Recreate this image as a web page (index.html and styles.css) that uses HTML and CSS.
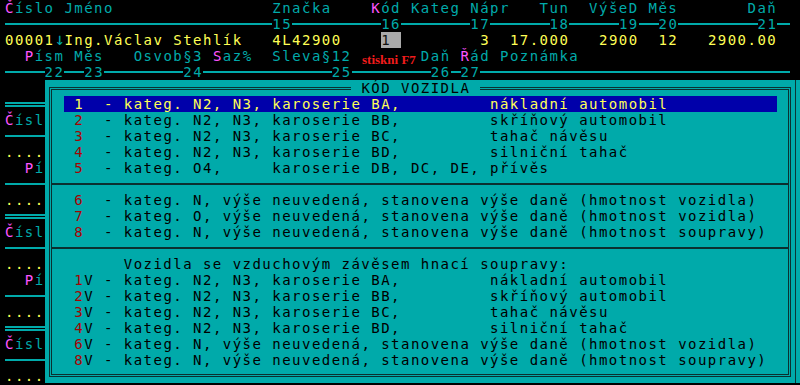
FILE: index.html
```html
<!DOCTYPE html>
<html lang="cs">
<head>
  <meta charset="UTF-8">
  <title>Daň silniční - seznam vozidel</title>
  <link rel="stylesheet" href="styles.css">
</head>
<body>

<div class="screen">
  <!-- prvni zaznam -->
  <div class="row"><span class="m">Č</span>íslo Jméno                Značka    <span class="m">K</span>ód Kateg Nápr   Tun  VýšeD Měs       Daň</div>
  <div class="row rule">                           <b>15</b>         <b>16</b>       <b>17</b>      <b>18</b>     <b>19</b>  <b>20</b>        <b>21</b></div>
  <div class="row y">00001<span class="arrow">↓</span>Ing.Václav Stehlík   4L42900    <span class="inp">1 </span>        3  17.000   2900  12   2900.00</div>
  <div class="row">  <span class="m">P</span>ísm Měs   Osvob§3 <span class="m">S</span>az%  Sleva§12<span class="hint">stiskni F7</span>Daň <span class="m">Ř</span>ád Poznámka</div>
  <div class="row rule">    <b>22</b>  <b>23</b>        <b>24</b>             <b>25</b>        <b>26</b> <b>27</b></div>
  <div class="row"></div>
  <div class="row dbl"></div>

  <!-- dalsi zaznamy pod oknem -->
  <div class="row"><span class="m">Č</span>íslo Jméno                Značka    <span class="m">K</span>ód Kateg Nápr   Tun  VýšeD Měs       Daň</div>
  <div class="row rule">                           <b>15</b>         <b>16</b>       <b>17</b>      <b>18</b>     <b>19</b>  <b>20</b>        <b>21</b></div>
  <div class="row y">.....</div>
  <div class="row">  <span class="m">P</span>ísm Měs   Osvob§3 <span class="m">S</span>az%  Sleva§12       Daň <span class="m">Ř</span>ád Poznámka</div>
  <div class="row rule">    <b>22</b>  <b>23</b>        <b>24</b>             <b>25</b>        <b>26</b> <b>27</b></div>
  <div class="row y">.....</div>
  <div class="row dbl"></div>

  <div class="row"><span class="m">Č</span>íslo Jméno                Značka    <span class="m">K</span>ód Kateg Nápr   Tun  VýšeD Měs       Daň</div>
  <div class="row rule">                           <b>15</b>         <b>16</b>       <b>17</b>      <b>18</b>     <b>19</b>  <b>20</b>        <b>21</b></div>
  <div class="row y">.....</div>
  <div class="row">  <span class="m">P</span>ísm Měs   Osvob§3 <span class="m">S</span>az%  Sleva§12       Daň <span class="m">Ř</span>ád Poznámka</div>
  <div class="row rule">    <b>22</b>  <b>23</b>        <b>24</b>             <b>25</b>        <b>26</b> <b>27</b></div>
  <div class="row y">.....</div>
  <div class="row dbl"></div>

  <div class="row"><span class="m">Č</span>íslo Jméno                Značka    <span class="m">K</span>ód Kateg Nápr   Tun  VýšeD Měs       Daň</div>
  <div class="row rule">                           <b>15</b>         <b>16</b>       <b>17</b>      <b>18</b>     <b>19</b>  <b>20</b>        <b>21</b></div>
  <div class="row y">.....</div>

  <!-- vyber kodu vozidla -->
  <div class="popup">
    <div class="frame">
      <span class="title"> KÓD VOZIDLA </span>
      <div class="row sel"> 1  - kateg. N2, N3, karoserie BA,         nákladní automobil</div>
      <div class="row"> <span class="r">2</span>  - kateg. N2, N3, karoserie BB,         skříňový automobil</div>
      <div class="row"> <span class="r">3</span>  - kateg. N2, N3, karoserie BC,         tahač návěsu</div>
      <div class="row"> <span class="r">4</span>  - kateg. N2, N3, karoserie BD,         silniční tahač</div>
      <div class="row"> <span class="r">5</span>  - kateg. O4,     karoserie DB, DC, DE, přívěs</div>
      <div class="sep"></div>
      <div class="row"> <span class="r">6</span>  - kateg. N, výše neuvedená, stanovena výše daně (hmotnost vozidla)</div>
      <div class="row"> <span class="r">7</span>  - kateg. O, výše neuvedená, stanovena výše daně (hmotnost vozidla)</div>
      <div class="row"> <span class="r">8</span>  - kateg. N, výše neuvedená, stanovena výše daně (hmotnost soupravy)</div>
      <div class="sep"></div>
      <div class="row">      Vozidla se vzduchovým závěsem hnací soupravy:</div>
      <div class="row"> <span class="r">1</span>V - kateg. N2, N3, karoserie BA,         nákladní automobil</div>
      <div class="row"> <span class="r">2</span>V - kateg. N2, N3, karoserie BB,         skříňový automobil</div>
      <div class="row"> <span class="r">3</span>V - kateg. N2, N3, karoserie BC,         tahač návěsu</div>
      <div class="row"> <span class="r">4</span>V - kateg. N2, N3, karoserie BD,         silniční tahač</div>
      <div class="row"> <span class="r">6</span>V - kateg. N, výše neuvedená, stanovena výše daně (hmotnost vozidla)</div>
      <div class="row"> <span class="r">8</span>V - kateg. N, výše neuvedená, stanovena výše daně (hmotnost soupravy)</div>
    </div>
  </div>
</div>

</body>
</html>
```

FILE: styles.css
```css
body {
  margin: 0;
  width: 800px;
  height: 385px;
  overflow: hidden;
  background: #000;
}
.screen {
  position: relative;
  padding-left: 5px;
  font-family: "DejaVu Sans Mono", monospace;
  font-size: 14px;
  line-height: 16px;
  letter-spacing: 1.471px;
  color: #00aaaa;
}
.row {
  height: 16px;
  white-space: pre;
}
.m { color: #ff55ff; }
.y { color: #ffff55; }
.r { color: #aa0000; }
.arrow {
  color: #00aaaa;
  font-size: 17px;
  line-height: 14px;
  letter-spacing: -0.33px;
}
.inp {
  background: #aaaaaa;
  color: #101010;
}
.hint {
  display: inline-block;
  box-sizing: border-box;
  width: 69.3px;
  padding-left: 10.5px;
  font: bold 13px/16px "Liberation Serif", serif;
  letter-spacing: 0;
  color: #f01c1c;
  vertical-align: -3px;
}
.rule {
  width: 785px;
  background: linear-gradient(#00aaaa, #00aaaa) 0 7px / 100% 2px no-repeat;
}
.rule b {
  font-weight: normal;
  background: #000;
}
.dbl {
  width: 785px;
  background:
    linear-gradient(#00aaaa, #00aaaa) 0 6px / 100% 2px no-repeat,
    linear-gradient(#00aaaa, #00aaaa) 0 9px / 100% 2px no-repeat;
}
.popup {
  position: absolute;
  left: 44.6px;
  top: 80px;
  width: 755.4px;
  height: 303px;
  background: #00aaaa;
  color: #000;
  box-shadow: inset -4px 0 0 #00aaaa, inset -5px 0 0 #0b3535;
}
.frame {
  position: relative;
  margin: 7px 9px 6px 4.4px;
  border: 3px double #0b3030;
  padding: 6px 10.8px 6px 12.4px;
}
.title {
  position: absolute;
  top: -10px;
  left: 299.5px;
  background: #00aaaa;
  white-space: pre;
}
.sel {
  background: #0000aa;
  color: #ffff55;
}
.sep {
  height: 16px;
  margin: 0 -10.8px 0 -12.4px;
  background: linear-gradient(#0b3030, #0b3030) 0 7px / 100% 2px no-repeat;
}
```
